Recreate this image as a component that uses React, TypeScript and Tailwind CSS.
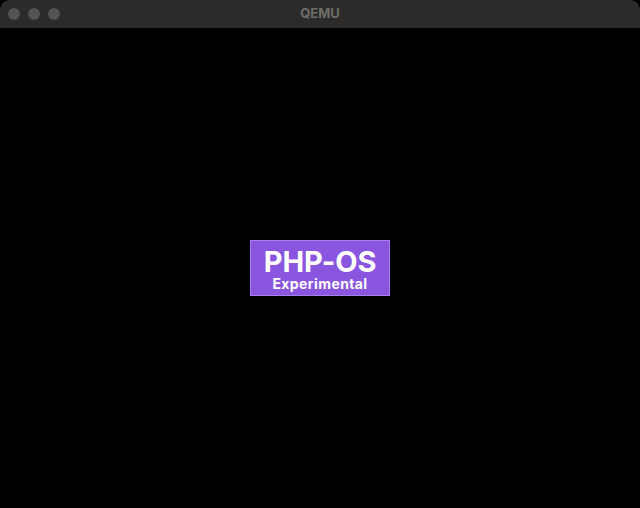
export default function App() {
  return (
    <div className="flex flex-col w-[640px] h-[508px] bg-black font-['Inter',sans-serif]">
      {/* Title bar */}
      <div className="relative flex items-center h-[28px] bg-[#2c2b29] rounded-t-[10px] px-[8px] gap-[8px]">
        <div className="w-[12px] h-[12px] rounded-full bg-[#545351]" />
        <div className="w-[12px] h-[12px] rounded-full bg-[#545351]" />
        <div className="w-[12px] h-[12px] rounded-full bg-[#545351]" />
        <div className="absolute inset-0 flex items-center justify-center text-[13px] font-bold text-[#6e6d6b]">
          QEMU
        </div>
      </div>

      {/* Screen */}
      <div className="flex-1 flex items-center justify-center bg-black">
        <div className="flex flex-col items-center w-[140px] h-[56px] bg-[#8a56df] border border-[#a77ff0] text-white font-bold">
          <div className="text-[29px] leading-[24px] mt-[9px] tracking-[-0.2px]">PHP-OS</div>
          <div className="text-[14px] leading-[16px] mt-[2px] tracking-[0.4px]">Experimental</div>
        </div>
      </div>
    </div>
  );
}
